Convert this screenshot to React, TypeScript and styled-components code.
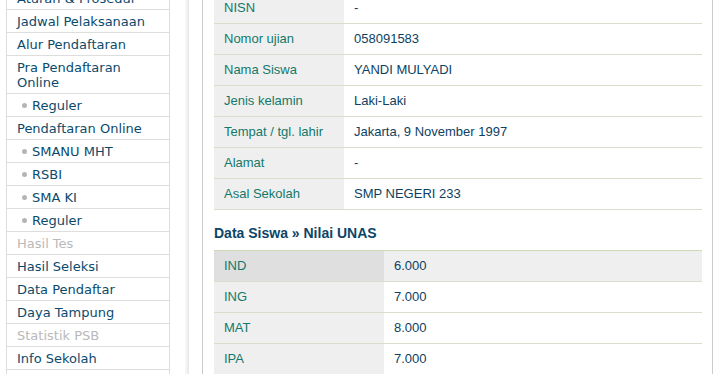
import React, { FC } from "react";
import styled, { createGlobalStyle } from "styled-components";

const GlobalStyle = createGlobalStyle`
  html, body {
    margin: 0;
    padding: 0;
    background: #fff;
    overflow: hidden;
  }
`;

const Page = styled.div`
  display: flex;
  align-items: flex-start;
  margin-top: -13px;
  padding-left: 6px;
  width: 713px;
  box-sizing: border-box;
`;

const Sidebar = styled.ul`
  list-style: none;
  margin: 0;
  padding: 0;
  width: 164px;
  box-sizing: border-box;
  border-left: 1px solid #dddddd;
  border-right: 1px solid #dddddd;
  font-family: "DejaVu Sans", Verdana, sans-serif;
  font-size: 13px;
  line-height: 15px;
`;

const MenuItem = styled.li<{ $disabled?: boolean; $sub?: boolean }>`
  display: flex;
  align-items: center;
  gap: 5px;
  padding: 4px 6px 3px ${(p) => (p.$sub ? "15px" : "10px")};
  border-bottom: 1px solid #dddddd;
  color: ${(p) => (p.$disabled ? "#b9b9b9" : "#0b4a6c")};
`;

const Bullet = styled.span`
  width: 5px;
  height: 5px;
  border-radius: 50%;
  background: #b5b5b5;
  flex: none;
`;

const Gutter = styled.div`
  width: 32px;
  flex: none;
  align-self: stretch;
  display: flex;
  padding-left: 15px;
  box-sizing: border-box;

  &::before {
    content: "";
    width: 4px;
    background: linear-gradient(to right, #fafafa, #e8e8e8);
  }
`;

const Panel = styled.div`
  width: 511px;
  box-sizing: border-box;
  border-left: 1px solid #cccccc;
  border-right: 1px solid #cccccc;
  padding: 5px 10px 0 11px;
  font-family: "Liberation Sans", Arial, sans-serif;
  font-size: 13px;
  min-height: 420px;
`;

const Table = styled.table<{ $accent?: boolean }>`
  width: 100%;
  border-collapse: collapse;
  border-top: ${(p) => (p.$accent ? "1px solid #cbdab4" : "none")};
`;

const Row = styled.tr`
  border-bottom: 1px solid #dcdccc;
`;

const Label = styled.td<{ $width: number; $active?: boolean }>`
  width: ${(p) => p.$width}px;
  box-sizing: border-box;
  height: 31px;
  padding: 0 10px;
  background: ${(p) => (p.$active ? "#dfdfdf" : "#efefef")};
  color: #12796b;
`;

const Value = styled.td<{ $active?: boolean }>`
  padding: 0 10px;
  background: ${(p) => (p.$active ? "#efefef" : "#ffffff")};
  color: #0d3f62;
`;

const Heading = styled.h3`
  margin: 0;
  padding: 15px 0 9px;
  font-size: 14px;
  font-weight: bold;
  color: #0c4568;
`;

type MenuEntry = { label: string; sub?: boolean; disabled?: boolean };

const menu: MenuEntry[] = [
  { label: "Aturan & Prosedur" },
  { label: "Jadwal Pelaksanaan" },
  { label: "Alur Pendaftaran" },
  { label: "Pra Pendaftaran Online" },
  { label: "Reguler", sub: true },
  { label: "Pendaftaran Online" },
  { label: "SMANU MHT", sub: true },
  { label: "RSBI", sub: true },
  { label: "SMA KI", sub: true },
  { label: "Reguler", sub: true },
  { label: "Hasil Tes", disabled: true },
  { label: "Hasil Seleksi" },
  { label: "Data Pendaftar" },
  { label: "Daya Tampung" },
  { label: "Statistik PSB", disabled: true },
  { label: "Info Sekolah" },
  { label: "Kontak" },
];

const biodata: [string, string][] = [
  ["NISN", "-"],
  ["Nomor ujian", "058091583"],
  ["Nama Siswa", "YANDI MULYADI"],
  ["Jenis kelamin", "Laki-Laki"],
  ["Tempat / tgl. lahir", "Jakarta, 9 November 1997"],
  ["Alamat", "-"],
  ["Asal Sekolah", "SMP NEGERI 233"],
];

const nilai: [string, string][] = [
  ["IND", "6.000"],
  ["ING", "7.000"],
  ["MAT", "8.000"],
  ["IPA", "7.000"],
];

const App: FC = () => (
  <>
    <GlobalStyle />
    <Page>
      <Sidebar>
        {menu.map((m, i) => (
          <MenuItem key={i} $sub={m.sub} $disabled={m.disabled}>
            {m.sub && <Bullet />}
            <span>{m.label}</span>
          </MenuItem>
        ))}
      </Sidebar>
      <Gutter />
      <Panel>
        <Table>
          <tbody>
            {biodata.map(([k, v]) => (
              <Row key={k}>
                <Label $width={130}>{k}</Label>
                <Value>{v}</Value>
              </Row>
            ))}
          </tbody>
        </Table>
        <Heading>Data Siswa » Nilai UNAS</Heading>
        <Table $accent>
          <tbody>
            {nilai.map(([k, v], i) => (
              <Row key={k}>
                <Label $width={170} $active={i === 0}>
                  {k}
                </Label>
                <Value $active={i === 0}>{v}</Value>
              </Row>
            ))}
          </tbody>
        </Table>
      </Panel>
    </Page>
  </>
);

export default App;
